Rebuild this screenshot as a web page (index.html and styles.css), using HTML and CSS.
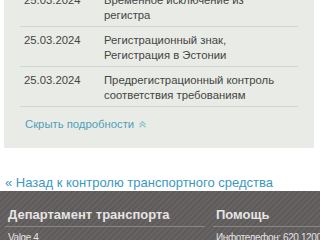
FILE: index.html
```html
<!DOCTYPE html>
<html lang="ru">
  <head>
    <meta charset="UTF-8" />
    <meta name="viewport" content="width=device-width, initial-scale=1.0" />
    <title>История регистрации</title>
    <link rel="stylesheet" href="styles.css">
  </head>
  <body>
    <div class="details">
      <table class="history">
        <tr>
          <td class="date">25.03.2024</td>
          <td>Временное исключение из регистра</td>
        </tr>
        <tr>
          <td class="date">25.03.2024</td>
          <td>Регистрационный знак, Регистрация в Эстонии</td>
        </tr>
        <tr>
          <td class="date">25.03.2024</td>
          <td>Предрегистрационный контроль соответствия требованиям</td>
        </tr>
      </table>
      <a class="toggle" href="#">Скрыть подробности
        <svg width="7" height="7" viewBox="0 0 7 7"><path d="M0.5 3.5 L3.5 0.8 L6.5 3.5 M0.5 6.3 L3.5 3.6 L6.5 6.3" fill="none" stroke="#8cc3d3" stroke-width="1.2"/></svg>
      </a>
    </div>
    <a class="back" href="#">« Назад к контролю транспортного средства</a>
    <footer class="site-footer">
      <div class="footer-col">
        <h4>Департамент транспорта</h4>
        <p>Valge 4</p>
      </div>
      <div class="footer-col">
        <h4>Помощь</h4>
        <p>Инфотелефон: 620 1200</p>
      </div>
    </footer>
  </body>
</html>
```
FILE: styles.css
```css
* {
  margin: 0;
  padding: 0;
  box-sizing: border-box;
}
body {
  font-family: "Liberation Sans", Arial, sans-serif;
  font-size: 13px;
  line-height: 15px;
  color: #444;
  background: #fff;
  overflow: hidden;
}
.details {
  margin: -23px 6px 0 4px;
  padding: 10px 16px 16px;
  background-color: #e9ece6;
  font-size: 11.3px;
}
.history {
  width: 100%;
  border-collapse: collapse;
  table-layout: fixed;
}
.history td {
  padding: 6px 12px 3px 4px;
  vertical-align: top;
  border-bottom: 1px solid #d3d6d0;
}
.history .date {
  width: 80px;
}
.toggle {
  display: block;
  margin-top: 10px;
  padding-left: 5px;
  color: #4f9fba;
  text-decoration: none;
}
.toggle svg {
  margin-left: 2px;
  vertical-align: 0;
}
.back {
  display: block;
  margin: 27px 0 0 5px;
  color: #3d97bf;
  text-decoration: none;
}
.site-footer {
  margin-top: 1px;
  height: 60px;
  padding: 15px 4px 0 5px;
  display: grid;
  grid-template-columns: 200px 1fr;
  gap: 8px;
  color: #e6e4e4;
  background-color: #5f5b5b;
  background-image: repeating-linear-gradient(-45deg, #5f5b5b 0, #5f5b5b 2px, #676363 2px, #676363 4px);
}
.footer-col h4 {
  font-size: 13px;
  font-weight: bold;
  padding: 1px 3px 4px;
  border-bottom: 1px solid #8a8686;
}
.footer-col p {
  padding: 3px 3px;
  font-size: 10px;
  letter-spacing: -0.4px;
  white-space: nowrap;
}
```
